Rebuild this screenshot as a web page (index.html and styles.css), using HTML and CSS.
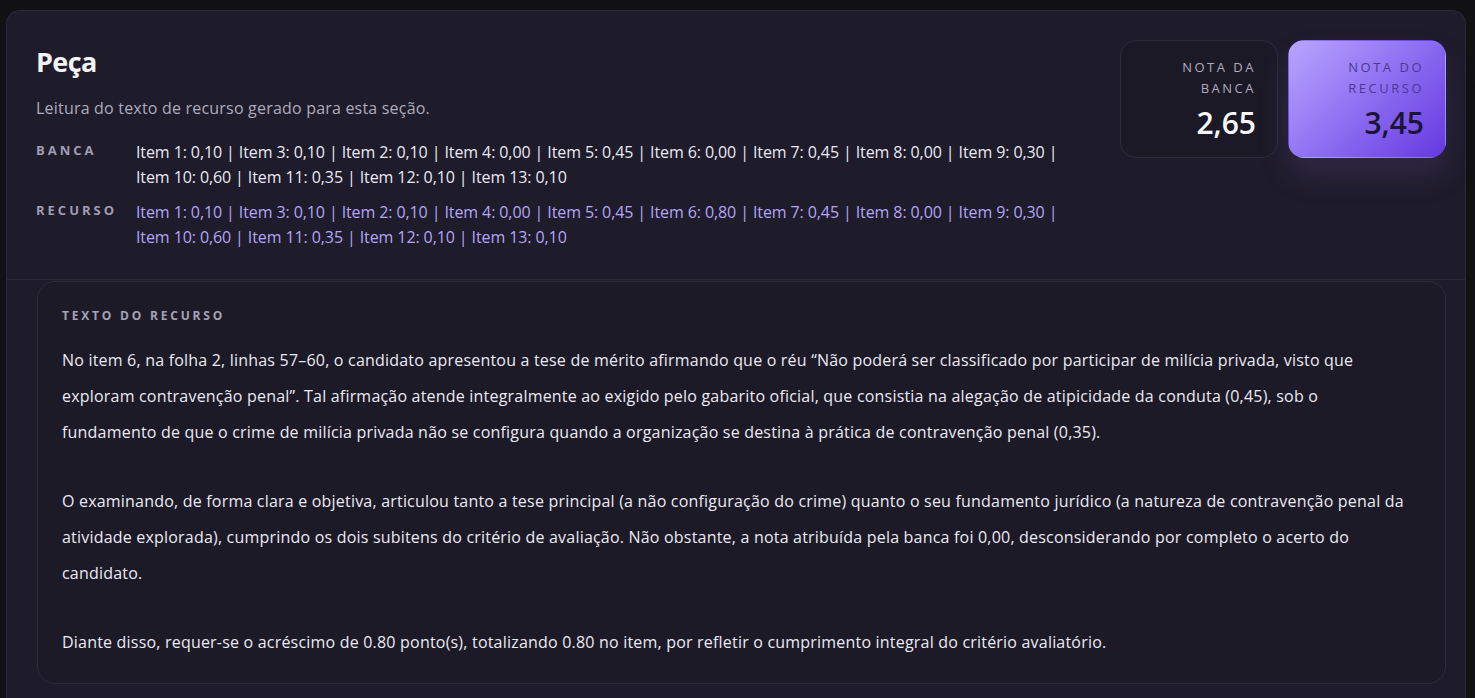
FILE: index.html
```html
<!DOCTYPE html>
<html lang="pt-BR">
<head>
<meta charset="utf-8">
<title>Peça</title>
<link rel="stylesheet" href="styles.css">
</head>
<body>
<section class="card">
  <header class="head">
    <div class="head-main">
      <h1 class="title">Peça</h1>
      <p class="subtitle">Leitura do texto de recurso gerado para esta seção.</p>
      <div class="rows">
        <div class="row">
          <span class="row-label">BANCA</span>
          <span class="row-items">Item 1: 0,10 | Item 3: 0,10 | Item 2: 0,10 | Item 4: 0,00 | Item 5: 0,45 | Item 6: 0,00 | Item 7: 0,45 | Item 8: 0,00 | Item 9: 0,30 |<br>Item 10: 0,60 | Item 11: 0,35 | Item 12: 0,10 | Item 13: 0,10</span>
        </div>
        <div class="row">
          <span class="row-label">RECURSO</span>
          <span class="row-items accent">Item 1: 0,10 | Item 3: 0,10 | Item 2: 0,10 | Item 4: 0,00 | Item 5: 0,45 | Item 6: 0,80 | Item 7: 0,45 | Item 8: 0,00 | Item 9: 0,30 |<br>Item 10: 0,60 | Item 11: 0,35 | Item 12: 0,10 | Item 13: 0,10</span>
        </div>
      </div>
    </div>
    <div class="scores">
      <div class="score">
        <div class="score-label">NOTA DA<br>BANCA</div>
        <div class="score-value">2,65</div>
      </div>
      <div class="score score-hi">
        <div class="score-label">NOTA DO<br>RECURSO</div>
        <div class="score-value">3,45</div>
      </div>
    </div>
  </header>
  <article class="text-card">
    <div class="text-label">TEXTO DO RECURSO</div>
    <p class="para">No item 6, na folha 2, linhas 57–60, o candidato apresentou a tese de mérito afirmando que o réu “Não poderá ser classificado por participar de milícia privada, visto que<br>exploram contravenção penal”. Tal afirmação atende integralmente ao exigido pelo gabarito oficial, que consistia na alegação de atipicidade da conduta (0,45), sob o<br>fundamento de que o crime de milícia privada não se configura quando a organização se destina à prática de contravenção penal (0,35).</p>
    <p class="para">O examinando, de forma clara e objetiva, articulou tanto a tese principal (a não configuração do crime) quanto o seu fundamento jurídico (a natureza de contravenção penal da<br>atividade explorada), cumprindo os dois subitens do critério de avaliação. Não obstante, a nota atribuída pela banca foi 0,00, desconsiderando por completo o acerto do<br>candidato.</p>
    <p class="para">Diante disso, requer-se o acréscimo de 0.80 ponto(s), totalizando 0.80 no item, por refletir o cumprimento integral do critério avaliatório.</p>
  </article>
</section>
</body>
</html>
```
FILE: styles.css
```css
* { box-sizing: border-box; }
html, body { margin: 0; height: 100%; }
body {
  background: #111113;
  padding: 10px 9px 0 6px;
  font-family: "Open Sans", "Liberation Sans", sans-serif;
  color: #e9e7f1;
  overflow: hidden;
}
.card {
  background: #1e1b2a;
  border: 1px solid #2a2738;
  border-bottom: none;
  border-radius: 14px 14px 0 0;
  min-height: 100%;
}
.head {
  display: flex;
  justify-content: space-between;
  align-items: flex-start;
  padding: 29px 19px 29px 29px;
  border-bottom: 1px solid #2c2939;
}
.title {
  margin: 0;
  font-size: 27px;
  line-height: 44px;
  font-weight: 700;
  color: #f4f3f8;
  letter-spacing: -0.6px;
}
.subtitle {
  margin: 12px 0 0;
  font-size: 16px;
  line-height: 24px;
  letter-spacing: 0.2px;
  color: #aeabbd;
}
.rows {
  margin-top: 20px;
  display: flex;
  flex-direction: column;
  gap: 10px;
}
.row { display: flex; }
.row-label {
  flex: 0 0 100px;
  font-size: 13px;
  font-weight: 700;
  letter-spacing: 3px;
  color: #a19db2;
  line-height: 20px;
}
.row-items {
  font-size: 16px;
  line-height: 25px;
  letter-spacing: -0.1px;
  white-space: nowrap;
  color: #ebe9f3;
}
.row-items.accent { color: #b4a5f7; }
.scores {
  display: flex;
  gap: 10px;
}
.score {
  width: 158px;
  height: 118px;
  border-radius: 16px;
  border: 1px solid #2e2b3c;
  background: #1c1927;
  padding: 16px 21px 0 16px;
  text-align: right;
}
.score-hi {
  border-color: transparent;
  background: linear-gradient(135deg, #b8a6ff 0%, #8e6ff2 50%, #6538e0 100%);
  box-shadow: 0 18px 30px rgba(120, 100, 200, 0.18);
}
.score-label {
  font-size: 13px;
  line-height: 21px;
  letter-spacing: 2.5px;
  color: #aeabbc;
}
.score-value {
  margin-top: 6px;
  font-size: 30px;
  line-height: 36px;
  font-weight: 600;
  color: #fbfaff;
}
.score-hi .score-label { color: #4c3890; }
.score-hi .score-value { color: #1b1433; }
.text-card {
  margin: 1px 19px 0 30px;
  border: 1px solid #2e2b3c;
  border-radius: 18px;
  background: #1d1a28;
  padding: 25px 24px 23px;
}
.text-label {
  font-size: 12px;
  line-height: 18px;
  font-weight: 700;
  letter-spacing: 2.8px;
  color: #a6a2b5;
}
.para {
  margin: 17px 0 0;
  font-size: 16px;
  line-height: 36px;
  letter-spacing: 0.2px;
  white-space: nowrap;
  color: #ebe9f2;
}
.para + .para { margin-top: 33px; }
```
